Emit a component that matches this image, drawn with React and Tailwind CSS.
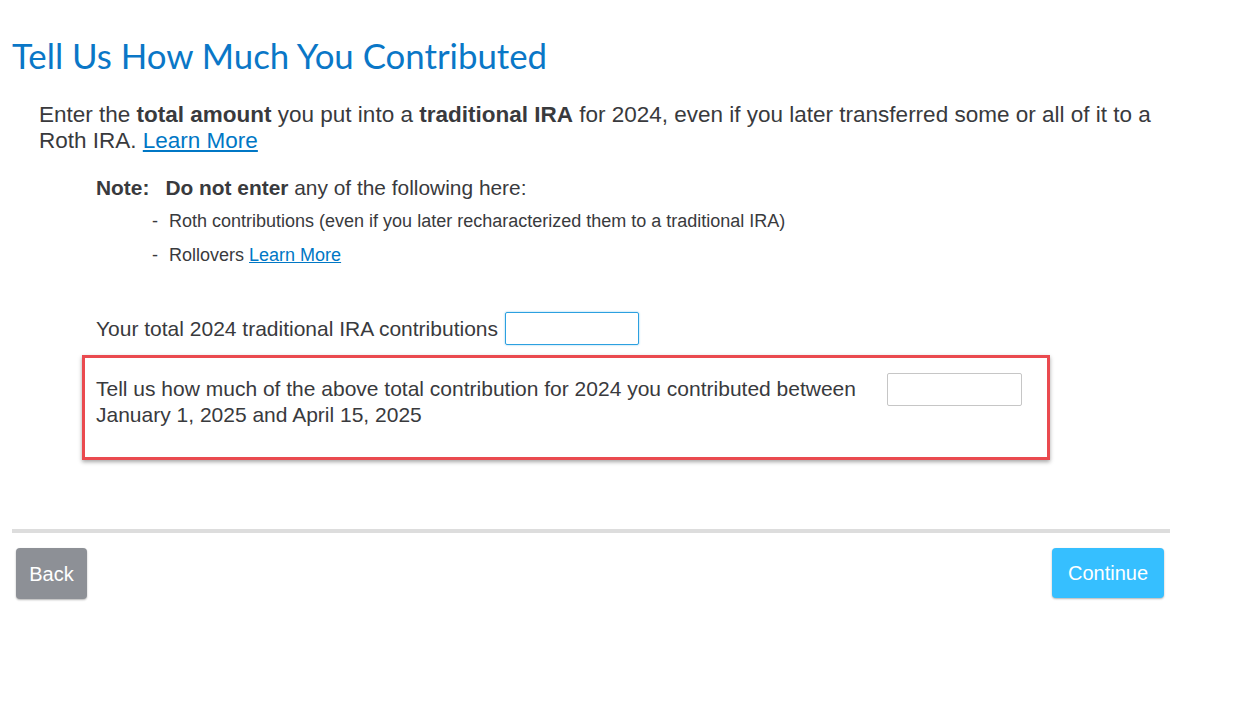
import { useState } from 'react';

export default function App() {
  const [total, setTotal] = useState('');
  const [late, setLate] = useState('');

  return (
    <div className="min-h-screen bg-white" style={{ fontFamily: '"Liberation Sans", Arial, sans-serif' }}>
      <div className="w-[1170px] pl-[12px]">
        {/* Heading */}
        <h1 className="pt-[36px] text-[34.8px] leading-[40px] text-[#0a77c7]"
          style={{ fontFamily: 'Lato, "Open Sans", sans-serif' }}>
          Tell Us How Much You Contributed
        </h1>

        {/* Intro */}
        <p className="mt-[26px] ml-[27px] pr-[10px] text-[22.5px] leading-[26px] text-[#393a3d]">
          Enter the <b>total amount</b> you put into a <b>traditional IRA</b> for 2024, even if you later transferred some or all of it to a
          Roth IRA. <a href="#" className="text-[#0077c5] underline">Learn More</a>
        </p>

        {/* Note */}
        <div className="ml-[84px] mt-[22px] text-[#393a3d]">
          <p className="text-[20.9px] leading-[24px]">
            <b>Note:</b><span className="inline-block w-[16px]" /><b>Do not enter</b> any of the following here:
          </p>
          <ul className="mt-[11px] ml-[56px] text-[18px] leading-[20px] space-y-[14px]">
            <li className="flex gap-[11px]"><span>-</span><span>Roth contributions (even if you later recharacterized them to a traditional IRA)</span></li>
            <li className="flex gap-[11px]"><span>-</span><span>Rollovers <a href="#" className="text-[#0077c5] underline">Learn More</a></span></li>
          </ul>
        </div>

        {/* Fields */}
        <div className="mt-[47px] ml-[70px] w-[968px]">
          <div className="flex items-center gap-[7px] pl-[14px]">
            <span className="text-[21px] text-[#393a3d]">Your total 2024 traditional IRA contributions</span>
            <input value={total} onChange={e => setTotal(e.target.value)} autoFocus
              className="w-[134px] h-[33px] border border-[#2ca0e0] rounded-[2px] px-2 text-[18px] outline-none shadow-[0_0_2px_rgba(44,160,224,0.6)]" />
          </div>

          <div className="mt-[10px] border-[3px] border-[#ea4a4f] shadow-[0_2px_4px_rgba(0,0,0,0.35)] h-[105px] flex items-start justify-between pl-[11px] pr-[25px] pt-[15px]">
            <p className="mt-[3px] text-[21px] leading-[26px] text-[#393a3d] w-[780px]">
              Tell us how much of the above total contribution for 2024 you contributed between January 1, 2025 and April 15, 2025
            </p>
            <input value={late} onChange={e => setLate(e.target.value)}
              className="w-[135px] h-[33px] border border-[#c6c6c6] rounded-[2px] px-2 text-[18px] outline-none" />
          </div>
        </div>

        {/* Divider */}
        <div className="mt-[69px] h-[4px] bg-[#dddddd]" />

        {/* Buttons */}
        <div className="mt-[15px] flex justify-between pl-[4px] pr-[6px]">
          <button className="w-[71px] h-[51px] rounded-[4px] bg-[#8d9096] text-white text-[20px] shadow-[0_1px_2px_rgba(0,0,0,0.3)]">
            Back
          </button>
          <button className="w-[112px] h-[50px] rounded-[4px] bg-[#36bfff] text-white text-[20px] shadow-[0_1px_2px_rgba(0,0,0,0.3)]">
            Continue
          </button>
        </div>
      </div>
    </div>
  );
}
